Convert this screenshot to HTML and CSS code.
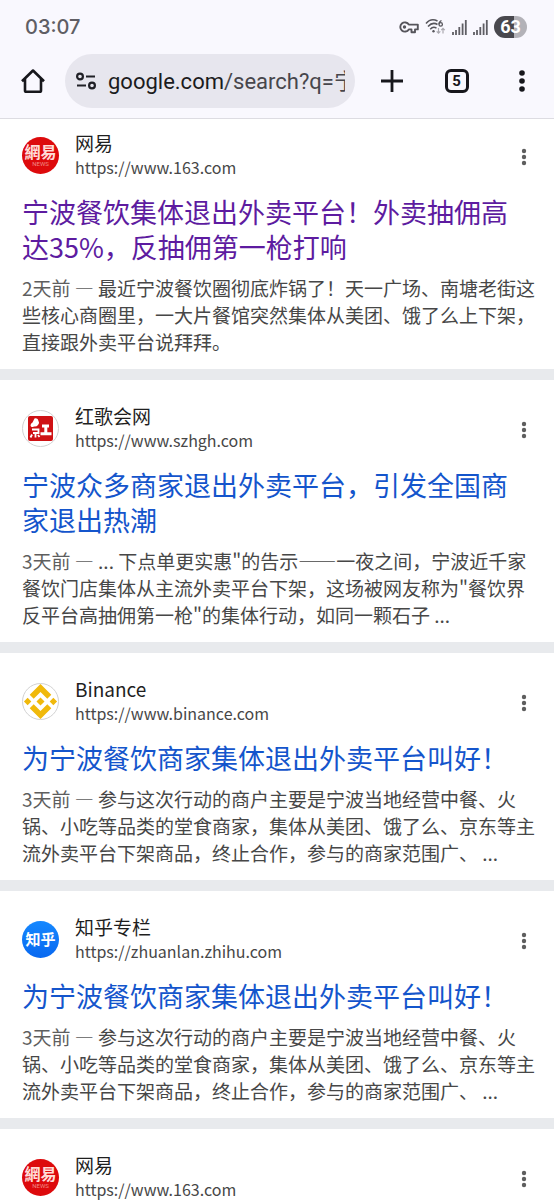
FILE: index.html
```html
<!DOCTYPE html>
<html lang="zh-CN">
<head>
<meta charset="utf-8">
<meta name="viewport" content="width=device-width, initial-scale=1">
<title>google.com/search</title>
<link rel="stylesheet" href="styles.css">
</head>
<body>
<svg class="sprite" aria-hidden="true">
  <symbol id="dots" viewBox="0 0 6 18"><circle cx="3" cy="3" r="2.2"/><circle cx="3" cy="9" r="2.2"/><circle cx="3" cy="15" r="2.2"/></symbol>
  <symbol id="signal" viewBox="0 0 15 16"><path d="M1 13v3M4 11v5M7.300 8v8M10.600 4.500v11.500M13.800 1v15" fill="none" stroke="#5f5e64" stroke-width="1.800"/></symbol>
</svg>
<header class="chrome">
  <div class="status">
    <time class="clock">03:07</time>
    <div class="status-icons">
      <svg width="20" height="14" viewBox="0 0 20 14" fill="none" stroke="#56555b" stroke-width="1.900"><path d="M9.800 4.600A4.600 4.600 0 1 0 9.800 9.400H12.500V12.200H16V9.400H18.800V4.600Z" stroke-linejoin="round"/><circle cx="5.500" cy="7" r="1.700" fill="#56555b" stroke="none"/></svg>
      <svg width="21" height="18" viewBox="0 0 21 18" fill="none" stroke="#56555b" stroke-width="1.500"><path d="M1 5.500Q6-.5 12.500 3M3 8.600Q7.500 3.500 12.500 6.500M5.200 11.200Q8.200 8 11.500 10.200"/><circle cx="8.500" cy="13.300" r="1.200" fill="#56555b" stroke="none"/><path d="M16.500 2.500Q14 3.500 14 6.200" stroke-width="1.300"/><circle cx="15.700" cy="6.400" r="1.700" stroke-width="1.300"/><path d="M13.500 10v5M11.700 13.300l1.800 1.900 1.800-1.900M18 15.500v-5M16.200 12.200l1.800-1.900 1.800 1.900" stroke="#aaa9af" stroke-width="1.200"/></svg>
      <svg width="15" height="16"><use href="#signal"/></svg>
      <svg width="15" height="16"><use href="#signal"/></svg>
      <span class="battery">63</span>
    </div>
  </div>
  <div class="toolbar">
    <button class="tool" aria-label="主页"><svg width="24" height="26" viewBox="0 0 24 26" fill="none" stroke="#17171c" stroke-width="2.600"><path d="M1 13.300L12 2.500L23 13.300M4 11V22.500Q4 23.800 5.300 23.800H18.700Q20 23.800 20 22.500V11" stroke-linejoin="round"/></svg></button>
    <div class="omnibox">
      <svg width="22" height="18" viewBox="0 0 22 18" fill="none" stroke="#202026" stroke-width="2.200"><circle cx="5" cy="4.500" r="2.900"/><path d="M11 4.500h9M2 13.500h9"/><circle cx="17" cy="13.500" r="2.900"/></svg>
      <div class="address"><span class="host">google.com</span>/search?q=宁</div>
    </div>
    <button class="tool" aria-label="新标签页"><svg width="22" height="22" viewBox="0 0 22 22" stroke="#17171c" stroke-width="2.800"><path d="M11 0v22M0 11h22"/></svg></button>
    <button class="tool" aria-label="标签页"><span class="tabs">5</span></button>
    <button class="tool" aria-label="菜单"><svg width="6" height="22" viewBox="0 0 6 22" fill="#17171c"><circle cx="3" cy="3" r="2.800"/><circle cx="3" cy="11" r="2.800"/><circle cx="3" cy="19" r="2.800"/></svg></button>
  </div>
</header>
<main class="results">
  <article class="result">
    <div class="source">
      <span class="logo netease"><b>網易</b><small>NEWS</small></span>
      <div class="site"><div class="name">网易</div><cite class="url">https://www.163.com</cite></div>
      <button class="more" aria-label="更多"><svg width="6" height="18"><use href="#dots"/></svg></button>
    </div>
    <h3 class="title"><a class="visited" href="#">宁波餐饮集体退出外卖平台！外卖抽佣高<br>达35%，反抽佣第一枪打响</a></h3>
    <p class="snippet"><span class="date">2天前 — </span>最近宁波餐饮圈彻底炸锅了！天一广场、南塘老街这<br>些核心商圈里，一大片餐馆突然集体从美团、饿了么上下架，<br>直接跟外卖平台说拜拜。</p>
  </article>
  <article class="result">
    <div class="source">
      <span class="logo ringed"><svg width="25" height="25" viewBox="0 0 25 25"><rect width="25" height="25" rx="2" fill="#cf1114"/><path d="M6.500 2.500Q10 1.500 10.500 5Q12 7 10 9Q8.500 11 6 10.500Q3 12 2.500 9.500Q2.500 7.500 4.500 6.500Z" fill="#fff"/><g fill="none" stroke="#fff"><path d="M4 13.500H10.500V17H5M7.500 16v5.500M4 18.500l-1.500 3M10 19l1.500 2" stroke-width="1.800"/><path d="M14 10H21M17.800 9.500V17M12.500 17.800H23.500" stroke-width="3"/></g></svg></span>
      <div class="site"><div class="name">红歌会网</div><cite class="url">https://www.szhgh.com</cite></div>
      <button class="more" aria-label="更多"><svg width="6" height="18"><use href="#dots"/></svg></button>
    </div>
    <h3 class="title"><a href="#">宁波众多商家退出外卖平台，引发全国商<br>家退出热潮</a></h3>
    <p class="snippet"><span class="date">3天前 — </span>... 下点单更实惠"的告示——一夜之间，宁波近千家<br>餐饮门店集体从主流外卖平台下架，这场被网友称为"餐饮界<br>反平台高抽佣第一枪"的集体行动，如同一颗石子 ...</p>
  </article>
  <article class="result">
    <div class="source">
      <span class="logo ringed"><svg width="35" height="35" viewBox="0 0 34 34" fill="#f0b90b"><path d="M17 0L27.500 10.500L23.600 14.400L17 7.800L10.400 14.400L6.500 10.500ZM17 34L27.500 23.500L23.600 19.600L17 26.200L10.400 19.600L6.500 23.500ZM17 13.100L20.900 17L17 20.900L13.100 17ZM4.500 13.400L8.100 17L4.500 20.600L.9 17ZM29.500 13.400L33.100 17L29.500 20.600L25.900 17Z"/></svg></span>
      <div class="site"><div class="name">Binance</div><cite class="url">https://www.binance.com</cite></div>
      <button class="more" aria-label="更多"><svg width="6" height="18"><use href="#dots"/></svg></button>
    </div>
    <h3 class="title"><a href="#">为宁波餐饮商家集体退出外卖平台叫好！</a></h3>
    <p class="snippet"><span class="date">3天前 — </span>参与这次行动的商户主要是宁波当地经营中餐、火<br>锅、小吃等品类的堂食商家，集体从美团、饿了么、京东等主<br>流外卖平台下架商品，终止合作，参与的商家范围广、 ...</p>
  </article>
  <article class="result">
    <div class="source">
      <span class="logo zhihu"><b>知乎</b></span>
      <div class="site"><div class="name">知乎专栏</div><cite class="url">https://zhuanlan.zhihu.com</cite></div>
      <button class="more" aria-label="更多"><svg width="6" height="18"><use href="#dots"/></svg></button>
    </div>
    <h3 class="title"><a href="#">为宁波餐饮商家集体退出外卖平台叫好！</a></h3>
    <p class="snippet"><span class="date">3天前 — </span>参与这次行动的商户主要是宁波当地经营中餐、火<br>锅、小吃等品类的堂食商家，集体从美团、饿了么、京东等主<br>流外卖平台下架商品，终止合作，参与的商家范围广、 ...</p>
  </article>
  <article class="result">
    <div class="source">
      <span class="logo netease"><b>網易</b><small>NEWS</small></span>
      <div class="site"><div class="name">网易</div><cite class="url">https://www.163.com</cite></div>
      <button class="more" aria-label="更多"><svg width="6" height="18"><use href="#dots"/></svg></button>
    </div>
  </article>
</main>
</body>
</html>
```
FILE: styles.css
```css
* { box-sizing: border-box; }
html { height: 100%; }
body {
  margin: 0;
  height: 100%;
  display: flex;
  flex-direction: column;
  overflow: hidden;
  background: #fff;
  color: #1f1f1f;
  font-family: "Noto Sans CJK SC", sans-serif;
}
button { border: 0; padding: 0; background: none; font: inherit; color: inherit; }
svg { display: block; }
.sprite { position: absolute; width: 0; height: 0; }

.chrome {
  flex: none;
  background: #f9f8fe;
  border-bottom: 1px solid #dddce2;
  font-family: Inter, "Noto Sans CJK SC", sans-serif;
}
.status {
  display: flex;
  justify-content: space-between;
  align-items: center;
  height: 54px;
  padding: 0 27px 0 25px;
}
.clock { font-size: 20px; font-weight: 500; color: #5f5e64; }
.status-icons { display: flex; align-items: center; gap: 6px; }
.battery {
  width: 33px;
  height: 22px;
  border-radius: 11px;
  background: linear-gradient(90deg, #49484e 62%, #b3b2b8 62%);
  color: #fff;
  font-family: Roboto, sans-serif;
  font-size: 18px;
  font-weight: 700;
  line-height: 22px;
  text-align: center;
}
.toolbar { display: flex; align-items: center; height: 64px; padding-bottom: 10px; }
.tool { flex: none; width: 65px; height: 54px; display: flex; align-items: center; justify-content: center; }
.omnibox {
  flex: 1;
  min-width: 0;
  height: 54px;
  margin-right: 4px;
  border-radius: 27px;
  background: #e7e6ee;
  display: flex;
  align-items: center;
  gap: 11px;
  padding: 0 10px;
}
.omnibox svg { flex: none; }
.address {
  flex: 1;
  min-width: 0;
  padding-top: 2px;
  overflow: hidden;
  white-space: nowrap;
  font-family: Roboto, "Noto Sans CJK SC", sans-serif;
  font-size: 22px;
  line-height: 32px;
  color: #47464c;
}
.host { color: #1b1b20; }
.tabs {
  width: 24px;
  height: 24px;
  border: 3px solid #17171c;
  border-radius: 6px;
  font-family: Roboto, sans-serif;
  font-size: 15px;
  font-weight: 700;
  line-height: 18px;
  color: #17171c;
}

.results { flex: 1; min-height: 0; overflow: hidden; }
.result { padding: 24px 16px 14px 22px; }
.result:first-child { padding-top: 12px; }
.result + .result { border-top: 11px solid #e8eaed; }
.source { display: flex; align-items: center; height: 48px; }
.logo {
  flex: none;
  width: 37px;
  height: 37px;
  border-radius: 50%;
  display: flex;
  flex-direction: column;
  align-items: center;
  justify-content: center;
  color: #fff;
  overflow: hidden;
}
.ringed { border: 1px solid #d2d2d2; }
.netease { background: #dd0a0c; color: #ffdcd8; }
.netease b { font-size: 16px; line-height: 18px; }
.netease small { font-family: Roboto, sans-serif; font-size: 6px; line-height: 8px; color: #f08a84; }
.zhihu { background: linear-gradient(#1588ff, #0868f0); }
.zhihu b { font-size: 15px; line-height: 18px; }
.site { flex: 1; min-width: 0; padding-left: 16px; }
.name { font-size: 19px; line-height: 24px; }
.url { display: block; font-size: 16px; line-height: 24px; font-style: normal; color: #474747; }
.more { width: 28px; height: 40px; padding-top: 4px; display: flex; align-items: center; justify-content: center; fill: #5e5e5e; }
.title { margin: 15px 0 10px; font-size: 27px; line-height: 35px; font-weight: 400; white-space: nowrap; }
.title a { color: #1455cc; text-decoration: none; }
.title .visited { color: #5d1ba0; }
.snippet { margin: 0; font-size: 19px; line-height: 27px; color: #474747; white-space: nowrap; }
.date { color: #5e5e5e; }
```
